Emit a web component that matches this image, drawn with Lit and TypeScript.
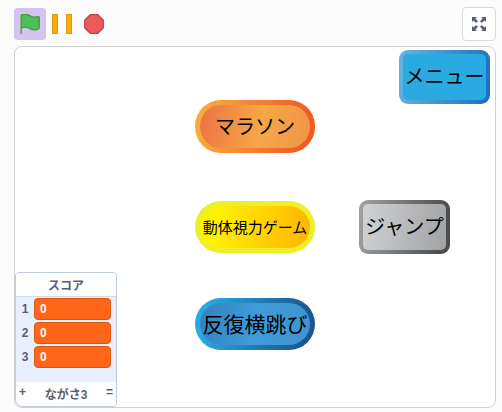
import { LitElement, html, css } from "lit";
import { customElement, property } from "lit/decorators.js";

@customElement("list-monitor")
class ListMonitor extends LitElement {
  @property() label = "";
  @property({ attribute: false }) values: number[] = [];

  static styles = css`
    :host {
      display: block;
      box-sizing: border-box;
      border: 1px solid #c0cbdc;
      border-radius: 4px 4px 4px 8px;
      background: #e6f0ff;
      overflow: hidden;
      color: #575e75;
      font: bold 12px/16px "Liberation Sans", "Noto Sans CJK JP", sans-serif;
    }
    .title {
      margin: 0;
      padding: 5px 0 2px;
      background: #fff;
      border-bottom: 1px solid #d5dae2;
      font-size: 12px;
      text-align: center;
    }
    .rows {
      list-style: none;
      margin: 0;
      padding: 1px 5px 14px 0;
      display: grid;
      gap: 2px;
    }
    .row {
      display: grid;
      grid-template-columns: 18px 1fr;
      align-items: center;
    }
    .index {
      text-align: center;
    }
    .value {
      padding: 2px 5px;
      border: 1px solid #e0560f;
      border-radius: 4px;
      background: #ff661a;
      color: #fff;
    }
    .footer {
      display: flex;
      justify-content: space-between;
      padding: 3px;
      background: #fff;
      line-height: 16px;
    }
    .add {
      border: 0;
      padding: 0;
      background: none;
      color: inherit;
      font: inherit;
      line-height: 14px;
      align-self: flex-start;
    }
    .length {
      padding-top: 2px;
    }
  `;

  render() {
    return html`
      <h2 class="title">${this.label}</h2>
      <ol class="rows">
        ${this.values.map(
          (v, i) => html`<li class="row"><span class="index">${i + 1}</span><span class="value">${v}</span></li>`
        )}
      </ol>
      <div class="footer">
        <button class="add" aria-label="追加">+</button>
        <span class="length">ながさ${this.values.length}</span>
        <span class="add">=</span>
      </div>
    `;
  }
}

@customElement("app-root")
class AppRoot extends LitElement {
  static styles = css`
    :host {
      display: block;
      box-sizing: border-box;
      min-height: 100vh;
      padding: 7px 6px 4px 14px;
      background: #fcfcfc;
      font-family: "Noto Sans CJK JP", sans-serif;
    }
    button {
      box-sizing: border-box;
      margin: 0;
      padding: 0;
      border: 0;
      background: none;
      font-family: inherit;
      color: #000;
    }
    svg {
      display: block;
    }
    .toolbar {
      display: flex;
      align-items: center;
      gap: 6px;
      margin-bottom: 5px;
    }
    .flag {
      padding: 6px;
      border-radius: 4px;
      background: #d3c4ef;
    }
    .stop {
      margin-left: 6px;
    }
    .fullscreen {
      margin-left: auto;
      padding: 6px;
      border: 1px solid #d9d9d9;
      border-radius: 4px;
      background: #fff;
    }
    .stage {
      position: relative;
      box-sizing: border-box;
      aspect-ratio: 482 / 362;
      border: 1px solid #d1d1d1;
      border-radius: 8px;
      background: #fff;
      overflow: hidden;
    }
    .sprite {
      position: absolute;
      white-space: nowrap;
      display: flex;
      align-items: center;
      justify-content: center;
      border: 4px solid transparent;
      background:
        var(--face) padding-box,
        var(--rim) border-box;
    }
    .pill {
      left: calc(50% - 60px);
      width: 120px;
      height: 52px;
      padding-bottom: 2px;
      border-width: 5px;
      border-radius: 26px;
    }
    .box {
      width: 91px;
      height: 54px;
      padding-bottom: 4px;
      border-radius: 9px;
      font-size: 20px;
    }
    .menu {
      top: calc(50% - 177px);
      left: calc(50% + 144px);
      --face: linear-gradient(#29abe2, #29abe2);
      --rim: linear-gradient(100deg, #68b4e5, #1b6fbd);
    }
    .marathon {
      top: calc(50% - 127px);
      height: 53px;
      font-size: 20px;
      --face: linear-gradient(100deg, #ee7744 5%, #f4a846 55%, #f19448);
      --rim: linear-gradient(100deg, #fbb040, #f15a24 90%);
    }
    .vision {
      top: calc(50% - 26px);
      font-size: 15px;
      --face: linear-gradient(100deg, #fff200 15%, #ffba00 90%);
      --rim: linear-gradient(#ecf02b, #ecf02b);
    }
    .sidestep {
      top: calc(50% + 71px);
      font-size: 21px;
      --face: linear-gradient(100deg, #3580bf, #3f9bd8 50%, #3f93d0);
      --rim: linear-gradient(100deg, #27a9e1 10%, #1b5690 90%);
    }
    .jump {
      top: calc(50% - 27px);
      left: calc(50% + 104px);
      --face: linear-gradient(100deg, #d0d2d3, #a0a2a4);
      --rim: linear-gradient(100deg, #a0a2a4, #4c4d4f 90%);
    }
    .score {
      position: absolute;
      left: 0;
      bottom: 0;
      width: 102px;
    }
  `;

  render() {
    return html`
      <div class="toolbar">
        <button class="flag" aria-label="実行">
          <svg width="20" height="20" viewBox="0 0 20 20">
            <path
              d="M1.200 19.300V1.200C4 -.2 7 0 10 1.800s5.700 1.500 8.300.9c.5-.1.900.2.900.7V14c0 .4-.2.700-.6.9-3 1.300-5.800 1.300-8.600-.3S4.200 12.600 1.200 14"
              fill="#4cbf56"
              stroke="#45993d"
              stroke-width="1.3"
              stroke-linecap="round"
              stroke-linejoin="round"
            />
          </svg>
        </button>
        <button class="pause" aria-label="一時停止">
          <svg width="20" height="20" viewBox="0 0 20 20">
            <g fill="#ffab00" stroke="#d99a10">
              <rect x=".5" y=".5" width="5" height="19" />
              <rect x="14.5" y=".5" width="5" height="19" />
            </g>
          </svg>
        </button>
        <button class="stop" aria-label="停止">
          <svg width="20" height="20" viewBox="0 0 20 20">
            <path
              d="M6.200.7h7.600l5.500 5.500v7.600l-5.500 5.500H6.200L.7 13.800V6.200z"
              fill="#ec5959"
              stroke="#b84848"
              stroke-width="1.3"
              stroke-linejoin="round"
            />
          </svg>
        </button>
        <button class="fullscreen" aria-label="全画面表示">
          <svg width="20" height="20" viewBox="0 0 20 20">
            <g fill="#575e75">
              <path d="M3 3h5L6.400 4.600l2.600 2.600L7.200 9 4.600 6.400 3 8z" />
              <path d="M17 3v5l-1.600-1.600L12.800 9 11 7.200l2.600-2.600L12 3z" />
              <path d="M17 17h-5l1.600-1.600-2.600-2.600 1.800-1.800 2.600 2.600L17 12z" />
              <path d="M3 17v-5l1.600 1.600L7.200 11 9 12.800l-2.600 2.600L8 17z" />
            </g>
          </svg>
        </button>
      </div>
      <main class="stage">
        <button class="sprite box menu">メニュー</button>
        <button class="sprite pill marathon">マラソン</button>
        <button class="sprite pill vision">動体視力ゲーム</button>
        <button class="sprite box jump">ジャンプ</button>
        <button class="sprite pill sidestep">反復横跳び</button>
        <list-monitor class="score" label="スコア" .values=${[0, 0, 0]}></list-monitor>
      </main>
    `;
  }
}
